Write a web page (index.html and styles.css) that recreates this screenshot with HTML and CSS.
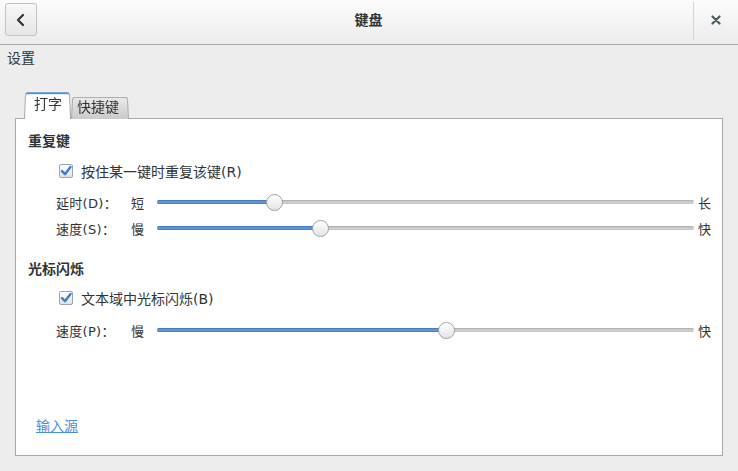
FILE: index.html
```html
<!DOCTYPE html>
<html lang="zh">
<head>
<meta charset="utf-8">
<title>键盘</title>
<link rel="stylesheet" href="styles.css">
</head>
<body>
<header class="hdr">
  <button class="back" aria-label="返回">
    <svg width="12" height="14" viewBox="0 0 12 14"><path d="M8 2 L3 7 L8 12" fill="none" stroke="#2e3436" stroke-width="2.2" stroke-linecap="round" stroke-linejoin="round"/></svg>
  </button>
  <div class="title">键盘</div>
  <div class="sep"></div>
  <button class="close" aria-label="关闭">
    <svg width="10" height="10" viewBox="0 0 10 10"><path d="M1.5 1.5 L8.5 8.5 M8.5 1.5 L1.5 8.5" stroke="#4f5b60" stroke-width="2.2" stroke-linecap="round"/></svg>
  </button>
</header>
<div class="crumb">设置</div>
<div class="tabs">
  <div class="tab active">打字</div>
  <div class="tab">快捷键</div>
</div>
<main class="panel">
  <div class="heading h1">重复键</div>
  <label class="check c1"><span class="box"><svg width="14" height="14" viewBox="0 0 14 14"><path d="M3 7.2 L6 10.2 L11.5 3" fill="none" stroke="#3f7ccb" stroke-width="2.4" stroke-linecap="round" stroke-linejoin="round"/></svg></span>按住某一键时重复该键(R)</label>
  <div class="srow s1"><span class="lbl">延时(D)：</span><span class="mn">短</span><div class="track"><div class="fill" style="width:21.8%"></div><div class="thumb" style="left:21.8%"></div></div><span class="mx">长</span></div>
  <div class="srow s2"><span class="lbl">速度(S)：</span><span class="mn">慢</span><div class="track"><div class="fill" style="width:30.4%"></div><div class="thumb" style="left:30.4%"></div></div><span class="mx">快</span></div>
  <div class="heading h2">光标闪烁</div>
  <label class="check c2"><span class="box"><svg width="14" height="14" viewBox="0 0 14 14"><path d="M3 7.2 L6 10.2 L11.5 3" fill="none" stroke="#3f7ccb" stroke-width="2.4" stroke-linecap="round" stroke-linejoin="round"/></svg></span>文本域中光标闪烁(B)</label>
  <div class="srow s3"><span class="lbl">速度(P)：</span><span class="mn">慢</span><div class="track"><div class="fill" style="width:54%"></div><div class="thumb" style="left:54%"></div></div><span class="mx">快</span></div>
  <a class="link" href="#">输入源</a>
</main>
</body>
</html>
```
FILE: styles.css
```css
* { box-sizing: border-box; }
html, body { margin: 0; padding: 0; }
body {
  width: 738px;
  height: 471px;
  overflow: hidden;
  background: #ededed;
  color: #2e3436;
  font-family: "DejaVu Sans", "Noto Sans CJK SC", sans-serif;
  font-size: 13px;
}
.hdr {
  height: 45px;
  display: flex;
  align-items: center;
  background: linear-gradient(#fcfcfc, #ececec);
  border-bottom: 1px solid #a8a8a8;
  padding: 0 0 0 5px;
}
.back {
  width: 32px;
  height: 33px;
  margin-top: -5px;
  border: 1px solid #c2c2c2;
  border-radius: 3px;
  background: linear-gradient(#f8f8f8, #e6e6e6);
  display: flex;
  align-items: center;
  justify-content: center;
  padding: 0;
}
.title {
  flex: 1;
  text-align: center;
  font-weight: bold;
  font-size: 14px;
  margin-top: -6px;
  padding-left: 7px;
}
.sep {
  width: 1px;
  height: 38px;
  background: #d4d4d4;
  align-self: flex-start;
  margin-top: 2px;
}
.close {
  width: 44px;
  height: 40px;
  border: 0;
  background: transparent;
  display: flex;
  align-items: center;
  justify-content: center;
  padding: 0;
  margin-top: -5px;
}
.crumb {
  padding: 4px 0 0 7px;
  height: 46px;
  line-height: 18px;
  font-size: 14px;
}
.tabs {
  display: flex;
  align-items: flex-end;
  margin-left: 24px;
  height: 28px;
  position: relative;
  z-index: 2;
  margin-bottom: -1px;
}
.tab {
  position: relative;
  height: 23px;
  padding: 0 10px 0 6px;
  line-height: 22px;
  font-size: 14px;
}
.tab::before {
  content: "";
  position: absolute;
  inset: 0;
  z-index: -1;
  border: 1px solid #a8a8a8;
  border-bottom: 0;
  border-radius: 3px 3px 0 0;
  background: linear-gradient(#e9e9e9, #cacaca);
  transform: perspective(40px) rotateX(4deg);
  transform-origin: bottom;
}
.tab.active {
  height: 28px;
  padding: 2px 9px 0 10px;
}
.tab.active::before {
  background: #fff;
  border-color: #a8a8a8;
  border-top: 2px solid #4a90d9;
}
.panel {
  margin: 0 15px;
  height: 338px;
  background: #fff;
  border: 1px solid #a8a8a8;
  padding: 0 11px 0 12px;
  display: flex;
  flex-direction: column;
  position: relative;
  z-index: 1;
}
.heading {
  font-weight: bold;
  height: 20px;
  line-height: 20px;
  font-size: 14px;
}
.h1 { margin-top: 12px; }
.h2 { margin-top: 21px; }
.check {
  display: flex;
  align-items: center;
  height: 20px;
  margin-left: 31px;
  gap: 8px;
  font-size: 14px;
}
.c1 { margin-top: 10px; }
.c2 { margin-top: 9px; }
.box {
  width: 14px;
  height: 14px;
  border: 1px solid #9aa6b4;
  border-radius: 2px;
  background: linear-gradient(#ffffff, #dfe3e8);
  display: flex;
  align-items: center;
  justify-content: center;
}
.box svg { margin: -1px; }
.srow {
  display: flex;
  align-items: center;
  height: 20px;
  margin-left: 28px;
}
.s1 { margin-top: 11px; }
.s2 { margin-top: 6px; }
.s3 { margin-top: 12px; }
.lbl { width: 75px; letter-spacing: 0.3px; }
.mn { width: 26px; }
.mx { margin-left: 4px; }
.track {
  flex: 1;
  height: 4px;
  border-radius: 2px;
  background: linear-gradient(#a9a9a9, #d6d6d6 60%, #b9b9b9);
  position: relative;
}
.fill {
  position: absolute;
  left: 0;
  top: 0;
  bottom: 0;
  border-radius: 2px 0 0 2px;
  background: linear-gradient(#3a6db5, #6d9fdc 50%, #3f74be);
}
.thumb {
  position: absolute;
  top: 50%;
  width: 17px;
  height: 17px;
  margin: -8.5px 0 0 -8.5px;
  border-radius: 50%;
  border: 1px solid #a4a4a4;
  background: linear-gradient(#ffffff, #e4e4e4);
}
.link {
  margin-top: auto;
  margin-bottom: 19px;
  margin-left: 8px;
  color: #4a90d9;
  font-size: 14px;
  line-height: 20px;
  align-self: flex-start;
}
```
